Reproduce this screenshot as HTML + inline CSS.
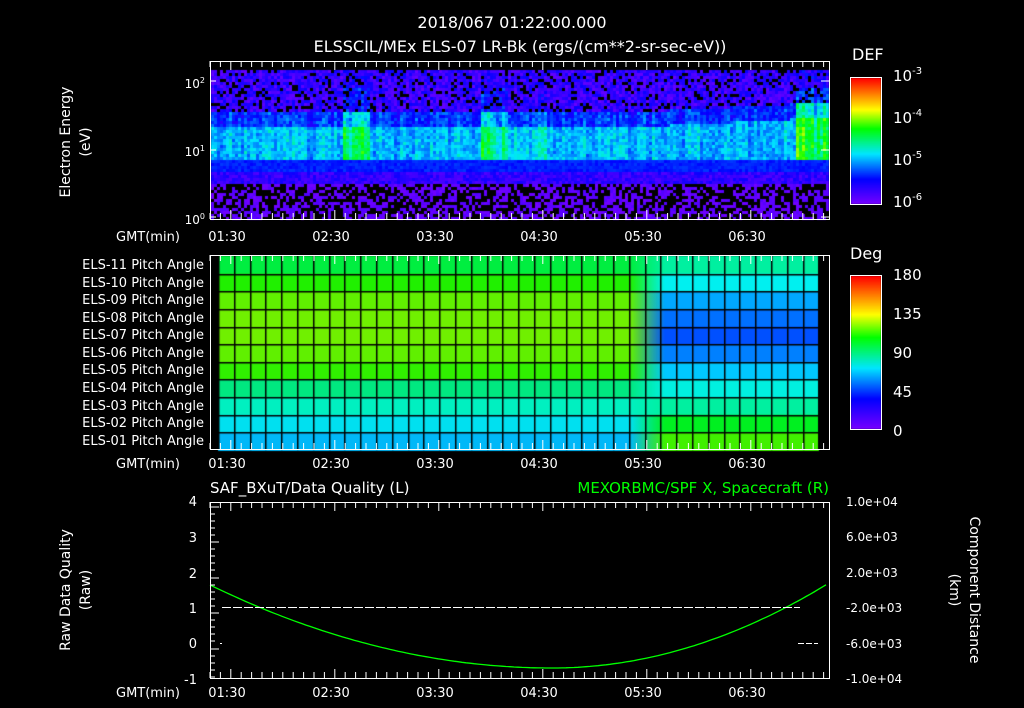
<!DOCTYPE html>
<html><head><meta charset="utf-8"><style>
html,body{margin:0;padding:0;background:#000;width:1024px;height:708px;overflow:hidden}
#w{position:relative;width:1024px;height:708px;font-family:"DejaVu Sans","Liberation Sans",sans-serif;color:#fff}
canvas{position:absolute;left:0;top:0}
svg{position:absolute;left:0;top:0}
</style></head><body><div id="w">
<canvas id="c" width="1024" height="708"></canvas>
<svg width="1024" height="708" font-family="DejaVu Sans, Liberation Sans, sans-serif" fill="#fff" font-size="13">
<text x="512" y="28" text-anchor="middle" font-size="16">2018/067 01:22:00.000</text>
<text x="520" y="52" text-anchor="middle" font-size="16">ELSSCIL/MEx ELS-07 LR-Bk  (ergs/(cm**2-sr-sec-eV))</text>
<text x="852" y="60" font-size="16">DEF</text>
<text x="850" y="259" font-size="16">Deg</text>
<g font-size="15"><text x="893" y="81">10<tspan dy="-7" font-size="10">-3</tspan></text>
<text x="893" y="123">10<tspan dy="-7" font-size="10">-4</tspan></text>
<text x="893" y="165">10<tspan dy="-7" font-size="10">-5</tspan></text>
<text x="893" y="207">10<tspan dy="-7" font-size="10">-6</tspan></text>
<text x="893" y="280">180</text><text x="893" y="319">135</text><text x="893" y="358">90</text><text x="893" y="397">45</text><text x="893" y="436">0</text></g>
<g font-size="12" text-anchor="end"><text x="205" y="88">10<tspan dy="-5" font-size="8">2</tspan></text><text x="205" y="156">10<tspan dy="-5" font-size="8">1</tspan></text><text x="205" y="224">10<tspan dy="-5" font-size="8">0</tspan></text></g>
<text transform="translate(70,142) rotate(-90)" text-anchor="middle" font-size="14">Electron Energy</text>
<text transform="translate(90,142) rotate(-90)" text-anchor="middle" font-size="14">(eV)</text>
<g font-size="13" text-anchor="end">
<text x="204" y="269">ELS-11 Pitch Angle</text><text x="204" y="287">ELS-10 Pitch Angle</text><text x="204" y="304">ELS-09 Pitch Angle</text><text x="204" y="322">ELS-08 Pitch Angle</text><text x="204" y="339">ELS-07 Pitch Angle</text><text x="204" y="357">ELS-06 Pitch Angle</text><text x="204" y="374">ELS-05 Pitch Angle</text><text x="204" y="392">ELS-04 Pitch Angle</text><text x="204" y="410">ELS-03 Pitch Angle</text><text x="204" y="427">ELS-02 Pitch Angle</text><text x="204" y="445">ELS-01 Pitch Angle</text></g>
<g font-size="13"><text x="116" y="241">GMT(min)</text><text x="116" y="468">GMT(min)</text><text x="116" y="697">GMT(min)</text></g>
<g font-size="13" text-anchor="middle" id="tl"></g>
<text x="210" y="493" font-size="15">SAF_BXuT/Data Quality (L)</text>
<text x="829" y="493" font-size="15" fill="#00ff00" text-anchor="end">MEXORBMC/SPF X, Spacecraft (R)</text>
<g font-size="13" text-anchor="end"><text x="197" y="506">4</text><text x="197" y="542">3</text><text x="197" y="578">2</text><text x="197" y="613">1</text><text x="197" y="648">0</text><text x="197" y="684">-1</text></g>
<text transform="translate(70,590) rotate(-90)" text-anchor="middle" font-size="14">Raw Data Quality</text>
<text transform="translate(90,590) rotate(-90)" text-anchor="middle" font-size="14">(Raw)</text>
<g font-size="12"><text x="846" y="506">1.0e+04</text><text x="846" y="541">6.0e+03</text><text x="846" y="577">2.0e+03</text><text x="846" y="612">-2.0e+03</text><text x="846" y="648">-6.0e+03</text><text x="846" y="683">-1.0e+04</text></g>
<text transform="translate(970,590) rotate(90)" text-anchor="middle" font-size="14">Component Distance</text>
<text transform="translate(950,590) rotate(90)" text-anchor="middle" font-size="14">(km)</text>
<polyline id="curve" stroke="#00ff00" fill="none" stroke-width="1.3"/>
<g shape-rendering="crispEdges">
<line x1="222" y1="607.5" x2="800" y2="607.5" stroke="#fff" stroke-dasharray="9,2"/>
<line x1="798" y1="643.5" x2="818" y2="643.5" stroke="#fff" stroke-dasharray="6,2"/>
</g>
<rect x="220" y="643" width="2" height="1" fill="#fff"/>
<g fill="none" stroke="#fff">
<rect x="210.5" y="61.5" width="619" height="158"/>
<rect x="210.5" y="255.5" width="619" height="194"/>
<rect x="210.5" y="502.5" width="619" height="176"/>
<rect x="850.5" y="77.5" width="31" height="127"/>
<rect x="850.5" y="275.5" width="31" height="154"/>
</g>
<g id="ticks" stroke="#fff"></g>
</svg>
<script>
(function(){
var c=document.getElementById('c').getContext('2d');
var s=123456789;function r(){s^=s<<13;s^=s>>>17;s^=s<<5;return ((s>>>0)%100000)/100000;}
function cm(t){t=Math.max(0,Math.min(1,t));var st=[[0,[120,0,255]],[0.2,[0,0,255]],[0.4,[0,230,255]],[0.6,[0,255,0]],[0.75,[255,255,0]],[1,[255,0,0]]];
for(var i=1;i<st.length;i++){if(t<=st[i][0]){var a=st[i-1],b=st[i],f=(t-a[0])/(b[0]-a[0]);return 'rgb('+[0,1,2].map(function(k){return Math.round(a[1][k]+(b[1][k]-a[1][k])*f)}).join(',')+')';}}return 'rgb(255,0,0)';}
for(var y=78;y<204;y++){c.fillStyle=cm((204-y)/126);c.fillRect(851,y,30,1);}
for(var y=276;y<429;y++){c.fillStyle=cm((429-y)/153);c.fillRect(851,y,30,1);}
var y0=70,y1=219;
for(var x=211;x<829;x+=3){
 var bump=0;
 if(x>342&&x<368)bump=0.1+r()*0.1;if(x>478&&x<508)bump=0.1+r()*0.12;if(x>535&&x<545)bump=0.06;if(x>795)bump=0.15+r()*0.15;
 var colv=(r()-0.5)*0.1;
 var tp=125-(x>650?(x-650)*0.05:0);
 for(var y=y0;y<y1;y+=3){
  var v,bb=(y>85&&y<160)?bump:bump*0.3;
  if(y<tp-15)v=0.03+r()*0.16+bb*0.6;
  else if(y<tp)v=0.18+r()*0.12+bb*0.9+colv;
  else if(y<160)v=0.3+r()*0.12+bb+colv;
  else if(y<170)v=0.2+r()*0.05;
  else if(y<182)v=0.06+r()*0.12;
  else v=(r()<0.5)?-1:0.01+r()*0.06;
  if(y<tp-15&&r()<0.18)v=-1;
  if(x>812&&y>185)v=(r()<0.4)?-1:0.05;
  if(v<0)continue;
  c.fillStyle=cm(v);c.fillRect(x,y,3,3);}
}
var L=['#00ee40','#20f000','#60f000','#70f000','#70f000','#60f000','#30f000','#00e880','#00f0c0','#00e0f0','#00b8f8'];
var R=['#00f0a0','#00f0f0','#00a8ff','#0070ff','#0050ff','#0080ff','#00c8ff','#00f0e0','#00f0a0','#00f020','#40f000'];
var rh=194/11;
for(var i=0;i<11;i++){var y=256+i*rh;
 var g=c.createLinearGradient(630,0,665,0);g.addColorStop(0,L[i]);g.addColorStop(1,R[i]);
 c.fillStyle=g;c.fillRect(218,y,601,rh+1);}
c.fillStyle='#000';
for(var x=218;x<=820;x+=15.8)c.fillRect(Math.round(x),256,1.5,194);
for(var i=1;i<11;i++)c.fillRect(218,Math.round(256+i*rh),601,1.5);
var pts=[];for(var x=210;x<=829;x+=4){var t=(x-552)/((x<552)?342:277);pts.push(x+','+(668-(x<552?83:85)*t*t).toFixed(1));}
document.getElementById('curve').setAttribute('points',pts.join(' '));
var tl=document.getElementById('tl'),tk=document.getElementById('ticks'),ns='http://www.w3.org/2000/svg';
var labs=['01:30','02:30','03:30','04:30','05:30','06:30'];
[241,468,697].forEach(function(yy){labs.forEach(function(t,i){var e=document.createElementNS(ns,'text');e.setAttribute('x',227+i*104);e.setAttribute('y',yy);e.textContent=t;tl.appendChild(e);});});
var h='';
[[61,219],[255,449],[502,678]].forEach(function(p){for(var x=210;x<829;x+=10.4){var big=Math.abs(((x-227)/104)-Math.round((x-227)/104))<0.05;var l=big?9:6;h+='M'+x+' '+p[0]+'v'+l+'M'+x+' '+p[1]+'v-'+l;}});
[507,542,578,613,649].forEach(function(y){for(var k=0;k<5;k++){h+='M210 '+(y+k*7)+'h'+(k==0?9:5);}});
[81,150,217].forEach(function(y){h+='M829 '+y+'h-8M210 '+y+'h6';});
var p=document.createElementNS(ns,'path');p.setAttribute('d',h);tk.appendChild(p);
})();
</script>
</div></body></html>
